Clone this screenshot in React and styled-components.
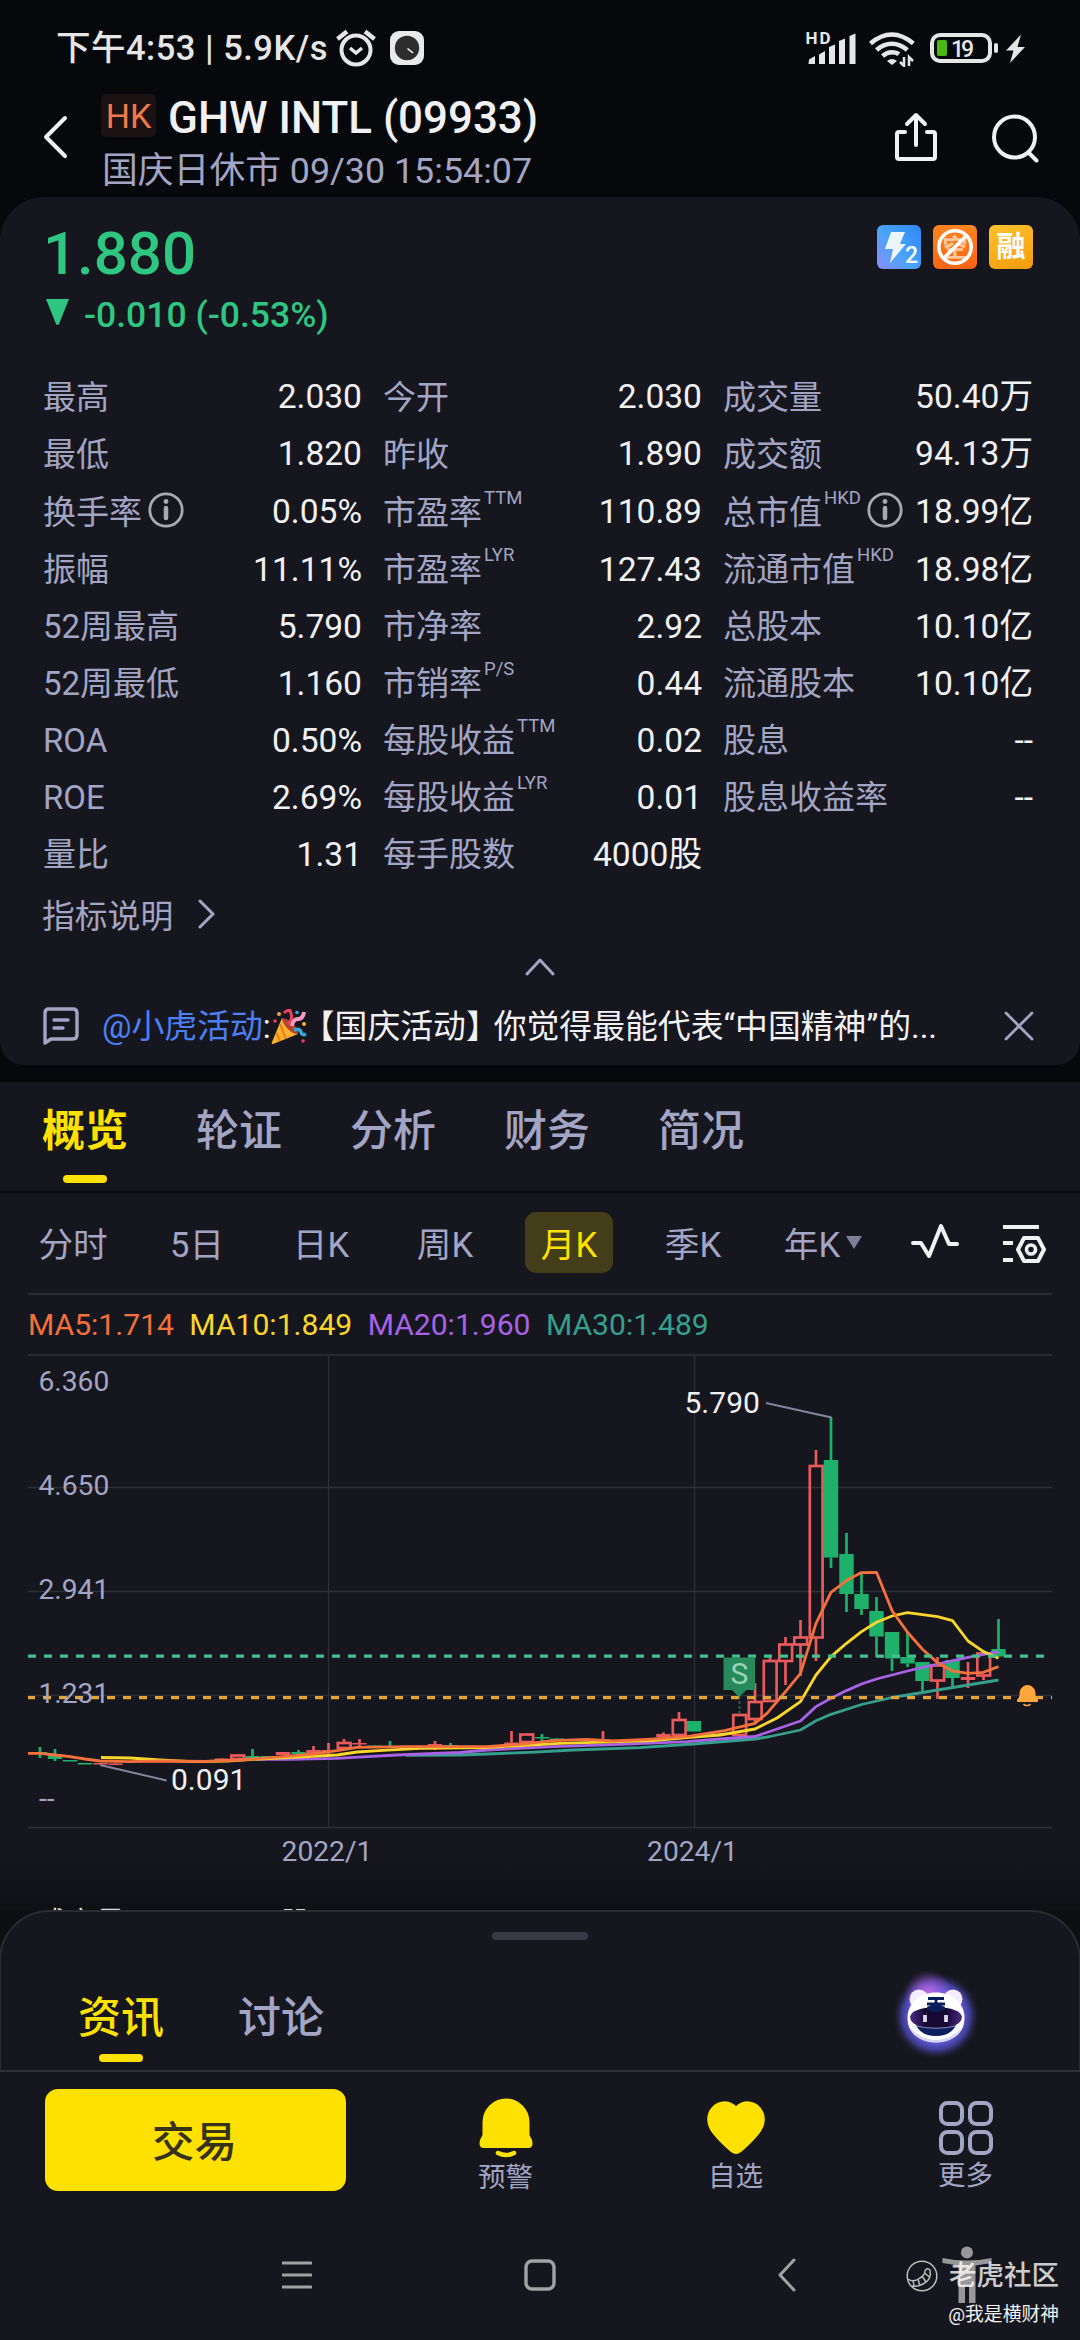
import React from "react";
import styled, { createGlobalStyle } from "styled-components";

const c = {
  bg: "#07080b",
  panel: "#16171e",
  label: "#a3a5c4",
  text: "#f1f1f4",
  green: "#2fc681",
  yellow: "#ffe100",
  line: "#2b2c32",
};

const Global = createGlobalStyle`
  * { box-sizing: border-box; }
  body {
    margin: 0;
    background: ${c.bg};
    font-family: Roboto, "Noto Sans CJK SC", sans-serif;
    color: ${c.text};
  }
  svg { display: block; flex: none; }
`;

const Screen = styled.main`
  width: 1080px;
  height: 2340px;
  display: flex;
  flex-direction: column;
  background: ${c.bg};
  overflow: hidden;
  white-space: nowrap;
`;

/* ---------- status bar ---------- */
const StatusBar = styled.div`
  height: 92px;
  padding: 3px 55px 0 56px;
  display: flex;
  align-items: center;
  justify-content: space-between;
`;
const StatusLeft = styled.div`
  display: flex;
  align-items: center;
  gap: 8px;
  font-size: 34.5px;
  line-height: 40px;
  font-weight: 500;
  color: #e6e6e6;
`;
const StatusTime = styled.span`
  letter-spacing: 0.5px;
`;
const AlarmGap = styled.span`
  margin-right: 6px;
`;
const StatusRight = styled.div`
  display: flex;
  align-items: center;
  color: #e6e6e6;
`;

/* ---------- header ---------- */
const Header = styled.header`
  height: 105px;
  padding: 0 42px 0 42px;
  display: flex;
`;
const BackBox = styled.div`
  width: 59px;
  padding-top: 23px;
`;
const TitleBlock = styled.div`
  flex: 1;
  padding-top: 2px;
`;
const TitleRow = styled.div`
  display: flex;
  align-items: center;
  gap: 12px;
  height: 48px;
`;
const Market = styled.span`
  width: 55px;
  height: 43px;
  margin-bottom: 6px;
  border-radius: 5px;
  background: #1c1113;
  color: #f2794a;
  font-size: 34px;
  line-height: 45px;
  text-align: center;
`;
const Name = styled.h1`
  margin: 0;
  font-size: 43.9px;
  line-height: 46px;
  margin-top: -1px;
  font-weight: 500;
`;
const Subtitle = styled.div`
  padding-left: 1px;
  margin-top: 6px;
  font-size: 35.8px;
  line-height: 46px;
  color: ${c.label};
`;
const HeaderIcons = styled.div`
  display: flex;
  gap: 49px;
  padding-top: 18px;
  margin-right: -2px;
`;

/* ---------- quote card ---------- */
const Card = styled.section`
  height: 868px;
  background: ${c.panel};
  border-radius: 44px 44px 24px 24px;
  padding: 0 47px 0 43px;
`;
const QuoteTop = styled.div`
  height: 171px;
  display: flex;
  justify-content: space-between;
  align-items: flex-start;
`;
const PriceBlock = styled.div`
  color: ${c.green};
  padding-top: 22px;
  font-weight: 500;
`;
const Price = styled.div`
  font-size: 60px;
  line-height: 70px;
`;
const Change = styled.div`
  display: flex;
  align-items: center;
  gap: 15px;
  margin-top: 4px;
  font-size: 35.5px;
  line-height: 44px;
  padding-left: 3px;
  svg { margin-top: -5px; }
`;
const Badges = styled.div`
  display: flex;
  gap: 12px;
  padding-top: 28px;
`;
const Badge = styled.div`
  width: 44px;
  height: 44px;
  border-radius: 6px;
  background: ${(p) => p.$bg};
  display: flex;
  align-items: center;
  justify-content: center;
  font-size: 29px;
  font-weight: 700;
  line-height: 44px;
  color: #fff;
`;
const Stats = styled.div`
  display: grid;
  grid-template-columns: 319px 319px 310px;
  column-gap: 21px;
  grid-template-rows: 57.2px 57.2px 58.5px repeat(6, 57px);
`;
const Stat = styled.div`
  display: flex;
  justify-content: space-between;
  align-items: center;
  font-size: 33.6px;
  line-height: 57px;
`;
const StatLabel = styled.span`
  display: flex;
  align-items: center;
  font-size: 33px;
  padding-top: 1px;
  color: ${c.label};
  sup {
    font-size: 18.5px;
    line-height: 18px;
    align-self: flex-start;
    margin: 5px 0 0 2px;
    vertical-align: baseline;
  }
  svg { margin: -4px 0 0 6px; }
`;
const Explain = styled.div`
  display: flex;
  align-items: center;
  gap: 25px;
  height: 62px;
  margin: 0 0 0 -1px;
  font-size: 32.8px;
  color: ${c.label};
`;
const Collapse = styled.div`
  height: 40px;
  margin-top: 2px;
  display: flex;
  justify-content: center;
  align-items: center;
  padding-left: 4px;
`;
const Notice = styled.div`
  height: 78px;
  margin-right: -1px;
  display: flex;
  align-items: center;
  font-size: 32.85px;
`;
const NoticeText = styled.div`
  flex: 1;
  display: flex;
  align-items: center;
  margin-left: 23px;
  padding-top: 2px;
  line-height: 44px;
`;
const Mention = styled.span`
  color: #4d80f5;
`;
const OpenBracket = styled.span`
  margin-left: -5px;
`;
const CloseBracket = styled.span`
  letter-spacing: -5px;
`;

/* ---------- tabs ---------- */
const TabBar = styled.nav`
  margin-top: 17px;
  height: 111px;
  padding: 17px 42px 0;
  display: flex;
  gap: 68px;
  background: ${c.panel};
  border-bottom: 2px solid #0b0c10;
`;
const Tab = styled.div`
  width: 86px;
  display: flex;
  flex-direction: column;
  align-items: center;
  gap: ${(p) => p.$gap || "12px"};
  font-size: 43px;
  line-height: 64px;
  font-weight: ${(p) => (p.$active ? p.$weight || 700 : 500)};
  color: ${(p) => (p.$active ? c.yellow : c.label)};
  &::after {
    content: "";
    width: 44px;
    height: 8px;
    border-radius: 4px;
    background: ${(p) => (p.$active ? c.yellow : "transparent")};
  }
`;

/* ---------- chart ---------- */
const ChartSection = styled.section`
  height: 717px;
  overflow: hidden;
  background: linear-gradient(${c.panel} 0, ${c.panel} 660px, #0f1014 717px);
`;
const PeriodWrap = styled.div`
  padding: 0 28px 0 19px;
`;
const PeriodRow = styled.div`
  height: 100px;
  display: flex;
  align-items: center;
  gap: 36px;
  padding: 0 0 2px 10px;
`;
const Period = styled.div`
  flex: none;
  height: 61px;
  width: ${(p) => (p.$wide ? 100 : 88)}px;
  border-radius: 11px;
  display: flex;
  align-items: center;
  justify-content: center;
  gap: 6px;
  font-size: 34.6px;
  background: ${(p) => (p.$active ? "#443d19" : "transparent")};
  color: ${(p) => (p.$active ? c.yellow : c.label)};
`;
const PeriodTools = styled.div`
  display: flex;
  gap: 43px;
  margin: 4px 0 0 auto;
  padding-right: 6px;
`;
const Rule = styled.div`
  height: 2px;
  margin: 0 0 0 9px;
  background: ${c.line};
`;
const Averages = styled.div`
  height: 59px;
  padding-left: 28px;
  display: flex;
  align-items: center;
  gap: 15.4px;
  font-size: 30.1px;
`;
const Average = styled.span`
  color: ${(p) => p.$color};
`;
const VolumeLabel = styled.div`
  padding: 31px 0 0 38px;
  display: flex;
  gap: 156px;
  font-size: 29px;
  line-height: 36px;
  color: #d8d8de;
`;

/* ---------- bottom sheet ---------- */
const SheetWrap = styled.section`
  background: #0d0e12;
`;
const Sheet = styled.div`
  height: 160px;
  border: 2px solid ${c.line};
  border-bottom: 0;
  border-radius: 50px 50px 0 0;
  background: ${c.panel};
  display: flex;
  flex-direction: column;
  align-items: center;
  margin: 0 -1px;
`;
const Handle = styled.div`
  margin-top: 20px;
  width: 96px;
  height: 8px;
  border-radius: 4px;
  background: #383944;
`;
const SheetTabs = styled.div`
  align-self: stretch;
  display: flex;
  gap: 74px;
  padding: 46px 95px 0 77px;
`;
const Bot = styled.div`
  margin: -18px 0 0 auto;
`;
const Actions = styled.section`
  height: 138px;
  border-top: 2px solid #303136;
  background: ${c.panel};
  padding: 17px 0 0 45px;
  display: flex;
`;
const Trade = styled.button`
  width: 301px;
  height: 102px;
  border: 0;
  border-radius: 13px;
  background: ${c.yellow};
  color: #37331a;
  font: 500 42.5px/98px Roboto, "Noto Sans CJK SC", sans-serif;
  padding: 5px 2px 0 0;
`;
const ActionList = styled.div`
  flex: 1;
  display: grid;
  grid-template-columns: 229px 231px 229px;
  margin-left: 45px;
  justify-items: center;
`;
const Action = styled.div`
  display: flex;
  flex-direction: column;
  align-items: center;
  color: ${c.label};
  font-size: 27.5px;
  line-height: 38px;
`;
const SystemNav = styled.footer`
  flex: 1;
  background: ${c.panel};
  position: relative;
  padding: 38px 0 0 282px;
  display: flex;
`;
const NavItem = styled.div`
  height: 58px;
  display: flex;
  align-items: center;
  margin-left: ${(p) => p.$ml || 0}px;
`;
const Watermark = styled.div`
  position: absolute;
  right: 21px;
  top: 49px;
  display: flex;
  flex-direction: column;
  align-items: flex-end;
`;
const WatermarkBrand = styled.div`
  display: flex;
  align-items: center;
  gap: 11px;
  font-size: 27.5px;
  line-height: 38px;
  font-weight: 500;
  color: rgba(255, 255, 255, 0.8);
`;
const WatermarkUser = styled.div`
  font-size: 18.8px;
  line-height: 26px;
  margin-top: 7px;
  color: #f0f0f0;
`;

const Stroke = ({ w, h, d, color = c.label, sw = 3, ...rest }) => (
  <svg width={w} height={h} viewBox={`0 0 ${w} ${h}`} fill="none" stroke={color} strokeWidth={sw} strokeLinecap="round" strokeLinejoin="round" {...rest}>
    <path d={d} />
  </svg>
);

const Alarm = () => (
  <svg width="40" height="38" viewBox="0 0 40 38" fill="none" stroke="#e6e6e6" strokeWidth="4">
    <circle cx="20" cy="21" r="14.5" />
    <path d="M1.5 10 11 2.5M38.5 10 29 2.5" strokeWidth="4.5" />
    <path d="m14 19 6 5 6-5" strokeWidth="3.5" />
  </svg>
);
const ClockApp = () => (
  <svg width="34" height="34" viewBox="0 0 34 34">
    <rect width="34" height="34" rx="9" fill="#e9e9e9" />
    <circle cx="17" cy="17" r="12.2" fill="#2d2d2d" />
    <path d="m17.5 17.5 5.5 4.5" stroke="#fff" strokeWidth="1.6" />
  </svg>
);
const StatusIcons = () => (
  <svg width="221" height="38" viewBox="804 28 221 38" fill="#e6e6e6">
    <text x="805.500" y="43" fontSize="17" fontWeight="700" textLength="25">HD</text>
    <path d="M809 58.500l6-3.500v8h-6.500zM819 53.500l6-3.500v13h-6zM829 46l6-2.500V63h-6zM839 40l6-2.500V63h-6zM849.500 35l6-2.500V63h-6z" />
    <g fill="none" stroke="#e6e6e6" strokeWidth="4.600">
      <path d="M870.500 42.500q10.500-9 21.300-9t21.500 9" />
      <path d="M876.500 49q7-6.200 15.300-6.200t15.500 6.200" />
      <path d="M882.500 55q4.500-3.800 9.300-3.800t7 2" />
    </g>
    <path d="M887 60q5-4 10 0l-5 4z" />
    <path d="M904 56v9l-4-4M909 65v-9l4 4" fill="none" stroke="#e6e6e6" strokeWidth="2.500" />
    <rect x="932" y="34" width="58" height="26" rx="8" fill="none" stroke="#e6e6e6" strokeWidth="4" />
    <rect x="937" y="39" width="10" height="16" rx="2" fill="#4cb814" />
    <text x="951" y="55.500" fontSize="23" fontWeight="500" textLength="23">19</text>
    <rect x="994" y="42" width="4" height="10" rx="2" />
    <path d="M1021 33.500 1006 49.500h7.500l-3.500 12.500 15-16h-7.500z" />
  </svg>
);
const InfoIcon = () => (
  <svg width="36" height="36" viewBox="0 0 36 36" fill="none" stroke="#a9a9b4">
    <circle cx="18" cy="18" r="16.200" strokeWidth="2.800" />
    <path d="M18 16v10" strokeWidth="4.500" strokeLinecap="round" />
    <circle cx="18" cy="9.500" r="2.400" fill="#a9a9b4" stroke="none" />
  </svg>
);
const Party = () => (
  <svg width="36" height="36" viewBox="0 0 36 36" fill="none">
    <path d="M11 9 27 25 2 35q-2 0-1-2z" fill="#ffb22e" />
    <path d="M9 15 15 30M5.500 24 9 32" stroke="#e67c1e" strokeWidth="2" />
    <path d="M11 9q7 1 12 7t4 9q-6 0-11-6T11 9" fill="#b8402f" />
    <path d="M17 15q6-5 2-13M13 4q4-4 7-2" stroke="#e8405a" strokeWidth="3" />
    <path d="M21 17q1-7 6-7t6-7" stroke="#f79bc0" strokeWidth="4" />
    <path d="M23 21q6-2 7 2t5 2" stroke="#35a8e0" strokeWidth="3.500" />
    <circle cx="8" cy="5" r="2" fill="#f2a33c" />
    <circle cx="26" cy="3.500" r="1.800" fill="#35a8e0" />
    <circle cx="33" cy="15" r="2" fill="#ffb22e" />
    <circle cx="32" cy="32" r="1.800" fill="#e8405a" />
    <circle cx="4" cy="12" r="1.800" fill="#e8405a" />
  </svg>
);

const stats = [
  ["最高", "2.030"], ["今开", "2.030"], ["成交量", "50.40万"],
  ["最低", "1.820"], ["昨收", "1.890"], ["成交额", "94.13万"],
  ["换手率", "0.05%", "", true], ["市盈率", "110.89", "TTM"], ["总市值", "18.99亿", "HKD", true],
  ["振幅", "11.11%"], ["市盈率", "127.43", "LYR"], ["流通市值", "18.98亿", "HKD"],
  ["52周最高", "5.790"], ["市净率", "2.92"], ["总股本", "10.10亿"],
  ["52周最低", "1.160"], ["市销率", "0.44", "P/S"], ["流通股本", "10.10亿"],
  ["ROA", "0.50%"], ["每股收益", "0.02", "TTM"], ["股息", "--"],
  ["ROE", "2.69%"], ["每股收益", "0.01", "LYR"], ["股息收益率", "--"],
  ["量比", "1.31"], ["每手股数", "4000股"],
];

/* Candles: [x, isUp, bodyTop, bodyBottom, high, low] */
const candles = [
  [40, 0, 1752, 1753.5, 1747, 1758],
  [55, 0, 1754, 1759, 1749, 1761],
  [70, 0, 1760, 1761.5, 1760, 1761],
  [85, 0, 1763, 1764.5, 1763, 1764],
  [100.500, 1, 1763, 1764.5, 1763, 1764],
  [115.500, 1, 1763.5, 1765, 1763, 1765],
  [222, 1, 1758.5, 1760, 1758, 1760],
  [237.500, 1, 1755.5, 1759, 1755, 1759],
  [252.500, 0, 1756, 1758, 1749, 1758],
  [268, 0, 1756, 1757.5, 1756, 1758],
  [283, 1, 1752, 1755, 1752, 1755],
  [298.500, 0, 1752, 1754, 1750, 1755],
  [313.500, 1, 1750, 1753, 1746, 1754],
  [328.500, 1, 1750, 1751.5, 1743, 1754],
  [344, 1, 1743, 1748, 1739, 1749],
  [359.500, 1, 1743, 1744.5, 1739, 1748],
  [374.500, 0, 1745.5, 1747, 1745, 1747],
  [390, 0, 1746, 1747.5, 1741, 1747],
  [405, 1, 1746, 1747, 1746, 1747],
  [420, 0, 1746.5, 1748, 1746, 1748],
  [435, 1, 1744, 1745.5, 1741, 1750],
  [450.500, 0, 1745, 1746.500, 1743, 1746],
  [496.500, 1, 1745, 1746.5, 1745, 1746],
  [511.500, 1, 1742.500, 1744, 1731, 1744],
  [526.500, 1, 1734.500, 1742, 1734, 1742],
  [542, 0, 1737, 1738.500, 1734, 1741],
  [557, 0, 1738.500, 1740, 1738, 1740],
  [587, 1, 1739, 1740.500, 1739, 1740],
  [603, 1, 1739.500, 1741, 1731, 1741],
  [663.500, 1, 1734, 1737, 1732.500, 1737],
  [679, 1, 1720, 1735, 1712, 1735],
  [694, 0, 1721, 1731.500, 1721, 1731.500],
  [709, 0, 1733, 1735, 1732, 1735],
  [724.500, 1, 1733, 1735, 1733, 1735],
  [739.500, 1, 1715, 1735, 1715, 1735],
  [755, 1, 1702, 1719, 1683, 1722],
  [770, 1, 1661, 1701, 1658, 1702],
  [785.500, 1, 1644.500, 1661, 1637, 1685],
  [800.500, 1, 1637.500, 1644.500, 1620, 1676],
  [816, 1, 1466, 1637.500, 1450, 1661],
  [831, 0, 1460, 1557.500, 1417, 1568],
  [846.500, 0, 1554, 1594, 1533, 1612],
  [861.500, 0, 1594, 1609, 1573, 1615],
  [876.500, 0, 1611, 1636.500, 1597, 1657],
  [892, 0, 1632, 1658.500, 1632, 1671],
  [907.500, 0, 1657, 1663.500, 1632, 1667],
  [922.500, 0, 1662, 1681, 1662, 1692],
  [937.500, 1, 1665.500, 1680.500, 1657, 1699],
  [952.500, 0, 1660, 1678, 1660, 1687],
  [968, 1, 1677, 1680, 1662, 1688],
  [983.500, 1, 1653.500, 1675.500, 1652, 1680],
  [998.500, 0, 1649, 1656.500, 1619, 1657],
];

const averages = [
  { name: "MA30", color: "#35a08d", label: "MA30:1.489", pts: "406,1755.3 460,1755 487,1754 530,1752.300 573,1750 640,1747.600 693,1744 755,1739 770,1736.500 800.500,1730 816,1720.700 831,1714.300 861.500,1704.500 892,1697.500 922.500,1692.500 968,1685 998.500,1680" },
  { name: "MA20", color: "#a862e6", label: "MA20:1.960", pts: "256,1759.300 287,1759.300 337,1758.300 367,1756.700 397,1755 460,1752.500 487,1750 553,1746.600 620,1744.300 687,1741.600 720,1739 755,1736.500 800.500,1721 816,1706.600 831,1698.300 846.500,1690.600 861.500,1684 876.500,1679 907.500,1671 937.500,1664 968,1657.300 998.500,1651.600" },
  { name: "MA10", color: "#fbd62b", label: "MA10:1.849", pts: "101,1757.500 130,1758 160,1760 193,1761.600 227,1761 253,1759.300 307,1756.600 337,1755 357,1752 383,1750.300 420,1748.300 487,1747.600 530,1745 560,1743.300 620,1741.600 653,1740.600 687,1737.600 720,1735 755,1729 777,1718 800.500,1701.600 816,1675 831,1656.600 846.500,1643.300 861.500,1631.600 876.500,1622.300 892,1616 907.500,1612.600 922.500,1614.600 937.500,1616.600 952.500,1620.600 968,1641 983.500,1651.600 998.500,1658.300" },
  { name: "MA5", color: "#f4713c", label: "MA5:1.714", pts: "28,1753.300 40,1753.300 55,1755 70,1756.600 85,1759 100,1761 130,1761.600 160,1761 207,1761.300 240,1760 283,1756.600 313,1754 337,1750.600 357,1747.300 407,1746.600 487,1746.600 520,1744.300 553,1740.600 587,1739.300 613,1741 647,1739.300 687,1736.600 724.500,1730.600 755,1723.300 767,1713.300 785.500,1691.600 800.500,1673.300 816,1623.300 831,1592.300 846.500,1580.600 861.500,1572.600 876.500,1572.300 892,1610.600 907.500,1632.300 922.500,1649.300 937.500,1662.600 952.500,1671 968,1673.300 983.500,1672.300 998.500,1666.600" },
];

const Candle = ({ d: [x, up, top, bottom, high, low] }) => {
  const col = up ? "#e95a5c" : "#1eb16c";
  const hollow = up && bottom - top > 3;
  return (
    <g stroke={col} strokeWidth="2.700">
      {high < top && <path d={`M${x} ${high}V${top}`} />}
      {low > bottom && <path d={`M${x} ${bottom}V${low}`} />}
      {hollow ? (
        <rect x={x - 6.2} y={top} width="12.800" height={bottom - top} fill="none" />
      ) : (
        <rect x={x - 7.2} y={top} width="14.400" height={bottom - top} fill={col} stroke="none" />
      )}
    </g>
  );
};

const Chart = () => (
  <svg width="1080" height="520" viewBox="0 1354 1080 520" fontFamily="Roboto">
    <g stroke="#2f3036" strokeWidth="1.300">
      <path d="M28 1355H1052M28 1487.500H1052M28 1591.500H1052M28 1695.500H1052M28 1827.500H1052" />
      <path d="M328.500 1355V1827M694.500 1355V1827" />
    </g>
    {candles.map((d) => (
      <Candle key={d[0]} d={d} />
    ))}
    <g fill="none" strokeWidth="2.800" strokeLinejoin="round">
      {averages.map((a) => (
        <polyline key={a.name} points={a.pts} stroke={a.color} />
      ))}
    </g>
    <path d="M28 1656.200H1044" stroke="#43c08b" strokeWidth="3.200" strokeDasharray="8 8" />
    <path d="M28 1697.700H1052" stroke="#e3a53a" strokeWidth="3.200" strokeDasharray="8 8" strokeDashoffset="1" />
    <path d="M739.500 1696V1714" stroke="#1f7a50" strokeWidth="1.500" strokeDasharray="3 2" />
    <path d="M723.500 1657.500h31.500v32.500h-8.500l-7.500 7-7-7h-8.500z" fill="#278a5b" />
    <text x="739.300" y="1683.500" fontSize="30" fill="#9dd3b6" textAnchor="middle">S</text>
    <path d="M1017.500 1701.500v-2l2.500-2.500v-4a7.500 7.500 0 0 1 15 0v4l2.500 2.500v2z" fill="#ffa63c" stroke="#ffa63c" strokeWidth="1" />
    <path d="M1023.500 1704a4 3 0 0 0 7 0" fill="none" stroke="#ffa63c" strokeWidth="1.500" />
    <path d="M766 1403 831.500 1417.500M100 1765 166.500 1780.500" stroke="#85859f" strokeWidth="1.800" fill="none" />
    <g fill={c.label} fontSize="28.200">
      <text x="38.500" y="1390.500">6.360</text>
      <text x="38.500" y="1494.500">4.650</text>
      <text x="38.500" y="1598.500">2.941</text>
      <text x="38.500" y="1702.500">1.231</text>
      <text x="39" y="1808">--</text>
      <text x="327" y="1861" textAnchor="middle">2022/1</text>
      <text x="692.500" y="1861" textAnchor="middle">2024/1</text>
    </g>
    <g fill={c.text} fontSize="30">
      <text x="684.500" y="1412.500">5.790</text>
      <text x="171" y="1789.500">0.091</text>
    </g>
  </svg>
);

const BotFace = () => (
  <svg width="96" height="96" viewBox="-48 -48 96 96">
    <defs>
      <radialGradient id="halo">
        <stop offset="0.6" stopColor="#5f5bdc" />
        <stop offset="0.78" stopColor="#4c47b4" stopOpacity="0.75" />
        <stop offset="1" stopColor="#16171e" stopOpacity="0" />
      </radialGradient>
      <radialGradient id="pink">
        <stop offset="0" stopColor="#c46be0" />
        <stop offset="1" stopColor="#9d5be0" stopOpacity="0" />
      </radialGradient>
      <linearGradient id="visor">
        <stop offset="0" stopColor="#4a2a86" />
        <stop offset="0.300" stopColor="#160833" />
        <stop offset="0.700" stopColor="#160833" />
        <stop offset="1" stopColor="#4a2a86" />
      </linearGradient>
    </defs>
    <circle r="44" fill="url(#halo)" />
    <circle cx="-8" cy="-22" r="24" fill="url(#pink)" />
    <circle cx="-17" cy="-17" r="9.500" fill="#f3edff" />
    <circle cx="17" cy="-17" r="9.500" fill="#f3edff" />
    <path d="M-28.500 2C-28.500-14-15-23.500 0-23.500S28.500-14 28.500 2 15 26.500 0 26.500-28.500 18-28.500 2" fill="#fff" />
    <path d="M-26 12Q-14 24 0 24T26 12Q18 26 0 26T-26 12" fill="#d5d3ee" />
    <path d="M-20 9Q0 14 20 9Q15 20 0 20T-20 9" fill="#0b1e5c" />
    <path d="M-26 1Q-24-8.500 0-8.500T26 1Q25 12 0 12T-26 1" fill="url(#visor)" />
    <path d="M-20 10Q0 14.500 20 10" fill="none" stroke="#a99fd8" strokeWidth="0.800" />
    <path d="M-9-9Q-8-4 0-4T9-9Q4-12 0-12T-9-9" fill="#0b1e5c" />
    <path d="M-8-17.500h16M-9-12h18M-9-7.500h18M0-19V-5" stroke="#0b1e5c" strokeWidth="2.800" />
    <path d="M-11-1V6M10-1V6" stroke="#d9d6f0" strokeWidth="3.800" />
  </svg>
);

export default function App() {
  return (
    <Screen>
      <Global />
      <StatusBar>
        <StatusLeft>
          <StatusTime>下午4:53 | 5.9K/s</StatusTime>
          <AlarmGap>
            <Alarm />
          </AlarmGap>
          <ClockApp />
        </StatusLeft>
        <StatusRight>
          <StatusIcons />
        </StatusRight>
      </StatusBar>

      <Header>
        <BackBox>
          <Stroke w={28} h={44} d="M23 3 4 22 23 41" color={c.text} sw={4} />
        </BackBox>
        <TitleBlock>
          <TitleRow>
            <Market>HK</Market>
            <Name>GHW INTL (09933)</Name>
          </TitleRow>
          <Subtitle>国庆日休市 09/30 15:54:07</Subtitle>
        </TitleBlock>
        <HeaderIcons>
          <Stroke w={50} h={54} d="M14 22H8Q6 22 6 24V47Q6 49 8 49H42Q44 49 44 47V24Q44 22 42 22H36M25 35V5M16 14 25 5 34 14" color={c.text} sw={4} />
          <Stroke w={50} h={54} d="M24.500 6.500a20.500 20.500 0 1 1 0 41a20.500 20.500 0 1 1 0-41M39 43l7.500 7.500" color={c.text} sw={4} />
        </HeaderIcons>
      </Header>

      <Card>
        <QuoteTop>
          <PriceBlock>
            <Price>1.880</Price>
            <Change>
              <svg width="23" height="27" viewBox="0 0 23 27" fill={c.green}>
                <path d="M0 0h23L13 25q-1.500 2-3 0z" />
              </svg>
              -0.010 (-0.53%)
            </Change>
          </PriceBlock>
          <Badges>
            <Badge $bg="linear-gradient(50deg,#8a8cff 0,#48a5f8 45%,#2f86f7)">
              <svg width="44" height="44" viewBox="0 0 44 44" fill="#fff">
                <path d="M14 7h14l-5 12h6L13 38l3-14H8z" fillOpacity="0.900" />
                <text x="28" y="38" fontSize="23" fontWeight="500">2</text>
              </svg>
            </Badge>
            <Badge $bg="linear-gradient(#ff8420,#f96416)">
              <svg width="44" height="44" viewBox="0 0 44 44">
                <text x="22" y="31.500" fontSize="25" fontWeight="700" fill="#ffc79b" textAnchor="middle">空</text>
                <g fill="none" stroke="#fff" strokeWidth="3.600">
                  <circle cx="22" cy="22" r="16.200" />
                  <path d="M11 33 33 11" />
                </g>
              </svg>
            </Badge>
            <Badge $bg="linear-gradient(160deg,#ffc42e,#f39a0b)">融</Badge>
          </Badges>
        </QuoteTop>
        <Stats>
          {stats.map(([name, value, sup, info], i) => (
            <Stat key={i}>
              <StatLabel>
                {name}
                {sup && <sup>{sup}</sup>}
                {info && <InfoIcon />}
              </StatLabel>
              <span>{value}</span>
            </Stat>
          ))}
        </Stats>
        <Explain>
          指标说明
          <Stroke w={18} h={30} d="M2 2 15 15 2 28" />
        </Explain>
        <Collapse>
          <Stroke w={30} h={18} d="M2 16 15 2 28 16" />
        </Collapse>
        <Notice>
          <Stroke w={36} h={38} d="M2 36V6Q2 2 6 2H30Q34 2 34 6V28Q34 32 30 32H8zM11 13H25M11 21H20" sw={3.4} />
          <NoticeText>
            <Mention>@小虎活动</Mention>:<Party />
            <OpenBracket>【</OpenBracket>国庆活动<CloseBracket>】</CloseBracket>
            你觉得最能代表“中国精神”的...
          </NoticeText>
          <Stroke w={30} h={30} d="M2 2 28 28M28 2 2 28" sw={2.8} />
        </Notice>
      </Card>

      <TabBar>
        {["概览", "轮证", "分析", "财务", "简况"].map((t, i) => (
          <Tab key={t} $active={i === 0}>{t}</Tab>
        ))}
      </TabBar>

      <ChartSection>
        <PeriodWrap>
          <PeriodRow>
            {["分时", "5日", "日K", "周K", "月K", "季K"].map((t) => (
              <Period key={t} $active={t === "月K"}>{t}</Period>
            ))}
            <Period $wide>
              年K
              <svg width="16" height="13" viewBox="0 0 16 13" fill="#7d7e98">
                <path d="M0 0h16L8 13z" />
              </svg>
            </Period>
            <PeriodTools>
              <Stroke w={48} h={36} d="M2 20H10L18 33 30 3 38 21H46" color={c.text} sw={4} />
              <svg width="44" height="42" viewBox="0 0 44 42" fill="none" stroke={c.text} strokeWidth="4">
                <path d="M1 4H37M1 20H11M1 37H11" />
                <path d="M22 15H36L42 26.500 36 38H22L16 26.500z" strokeLinejoin="round" />
                <circle cx="29" cy="26.500" r="4.500" strokeWidth="3.600" />
              </svg>
            </PeriodTools>
          </PeriodRow>
          <Rule />
        </PeriodWrap>
        <Averages>
          {[...averages].reverse().map((a) => (
            <Average key={a.name} $color={a.color}>{a.label}</Average>
          ))}
        </Averages>
        <Chart />
        <VolumeLabel>
          <span>成交量</span>
          <span>股</span>
        </VolumeLabel>
      </ChartSection>

      <SheetWrap>
        <Sheet>
          <Handle />
          <SheetTabs>
            <Tab $active $weight={500} $gap="4px">资讯</Tab>
            <Tab>讨论</Tab>
            <Bot>
              <BotFace />
            </Bot>
          </SheetTabs>
        </Sheet>
      </SheetWrap>

      <Actions>
        <Trade>交易</Trade>
        <ActionList>
          <Action>
            <svg width="60" height="70" viewBox="0 0 60 70" fill={c.yellow}>
              <path d="M6.500 35V33a23.500 23.500 0 0 1 47 0v13l2.500 5q2 8-4 8H8q-6 0-4-8l2.500-5z" />
              <path d="M22 64q8 4 16 0" fill="none" stroke={c.yellow} strokeWidth="4.500" strokeLinecap="round" />
            </svg>
            预警
          </Action>
          <Action>
            <svg width="60" height="69" viewBox="0 0 60 69" fill={c.yellow}>
              <path d="M30 17C37 10 48 11 54 18C61 26 60 36 53 45C48 51 41 58 35 63Q30 67 25 63C19 58 12 51 7 45C0 36-1 26 6 18C12 11 23 10 30 17" />
            </svg>
            自选
          </Action>
          <Action>
            <svg width="54" height="68" viewBox="0 0 54 68" fill="none" stroke={c.label} strokeWidth="4">
              <rect x="2" y="14" width="21" height="21" rx="6.500" />
              <rect x="31" y="14" width="21" height="21" rx="6.500" />
              <rect x="2" y="43" width="21" height="21" rx="6.500" />
              <rect x="31" y="43" width="21" height="21" rx="6.500" />
            </svg>
            更多
          </Action>
        </ActionList>
      </Actions>

      <SystemNav>
        <NavItem>
          <Stroke w={30} h={32} d="M1 4H29M1 16H29M1 28H29" color="#a2a2a4" sw={3} />
        </NavItem>
        <NavItem $ml={212}>
          <svg width="32" height="32" viewBox="0 0 32 32" fill="none" stroke="#a2a2a4" strokeWidth="3.400">
            <rect x="2" y="2" width="28" height="28" rx="6" />
          </svg>
        </NavItem>
        <NavItem $ml={221}>
          <Stroke w={20} h={34} d="M17 2 3 17 17 32" color="#a2a2a4" sw={3} />
        </NavItem>
        <NavItem $ml={145}>
          <svg width="50" height="58" viewBox="0 0 50 58" fill="#98989a">
            <circle cx="25" cy="6.500" r="6" />
            <path d="M0.500 12Q25 17 49.500 12v5L33.500 19.500V57h-6.500V40h-4v17h-6.500V19.500L0.500 17z" />
          </svg>
        </NavItem>
        <Watermark>
          <WatermarkBrand>
            <svg width="32" height="32" viewBox="0 0 32 32" fill="none" stroke="#bdbdbf" strokeWidth="1.500">
              <circle cx="16" cy="16" r="14.800" />
              <path d="M2 19q5 4 12-1 5-3 5-7 2-4 5-1 2 10-7 14-6 3-11 2" />
              <path d="m7 20 1 6M12 19l2 7M16 16l4 6M18.500 13l5 4" />
            </svg>
            老虎社区
          </WatermarkBrand>
          <WatermarkUser>@我是横财神</WatermarkUser>
        </Watermark>
      </SystemNav>
    </Screen>
  );
}
